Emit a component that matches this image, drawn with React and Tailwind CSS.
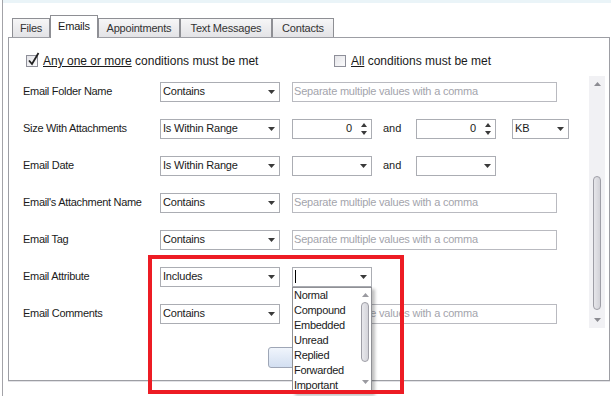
import React from "react";

const tabs = [
    { name: "Files", w: "w-[38px]" },
    { name: "Emails", w: "w-[48px]", active: true },
    { name: "Appointments", w: "w-[82px]" },
    { name: "Text Messages", w: "w-[92px]" },
    { name: "Contacts", w: "w-[62px]" },
];

const attributes = ["Normal", "Compound", "Embedded", "Unread", "Replied", "Forwarded", "Important"];

function Arrow({ color = "#3a3a3a" }) {
    return (
        <svg width="7" height="4" viewBox="0 0 7 4" className="shrink-0">
            <path d="M0 0h7L3.5 4z" fill={color} />
        </svg>
    );
}

function Select({ value, w = "w-[120px]", children }) {
    return (
        <div className={`relative flex h-[20px] ${w} shrink-0 items-center border border-[#abadb3] bg-white pl-[2px] pr-[4px]`}>
            <span className="flex-1 text-[11px] tracking-[-0.2px] text-[#1a1a1a]">{value}</span>
            <Arrow />
            {children}
        </div>
    );
}

function TextInput() {
    return (
        <div className="ml-[12px] flex h-[20px] w-[265px] items-center border border-[#b9bac0] bg-white px-[1px] text-[11px] tracking-[-0.2px] text-[#a3a4ac]">
            Separate multiple values with a comma
        </div>
    );
}

function Spinner() {
    return (
        <div className="flex h-[20px] w-[80px] shrink-0 items-center border border-[#abadb3] bg-white pr-[4px]">
            <span className="flex-1 pr-[9px] text-right text-[11px] text-[#1a1a1a]">0</span>
            <div className="flex flex-col gap-[4px]">
                <svg width="6" height="4" viewBox="0 0 6 4"><path d="M0 4h6L3 0z" fill="#3a3a3a" /></svg>
                <svg width="6" height="4" viewBox="0 0 6 4"><path d="M0 0h6L3 4z" fill="#3a3a3a" /></svg>
            </div>
        </div>
    );
}

function Row({ label, children }) {
    return (
        <div className="flex h-[37px] items-center">
            <div className="w-[137px] shrink-0 text-[11px] tracking-[-0.3px] text-[#1b1b1b]">{label}</div>
            {children}
        </div>
    );
}

function And() {
    return <div className="ml-[11px] w-[33px] shrink-0 text-[11px] text-[#1b1b1b]">and</div>;
}

function AttributeList() {
    return (
        <div className="absolute left-[-1px] top-[19px] z-20 flex h-[107px] w-[80px] border border-[#8f9095] bg-white shadow-[3px_2px_3px_rgba(0,0,0,0.25)]">
            <div className="flex-1 pl-[1px]">
                {attributes.map((a) => (
                    <div key={a} className="h-[15px] text-[11px] leading-[15px] tracking-[-0.3px] text-[#1a1a1a]">
                        {a}
                    </div>
                ))}
            </div>
            <div className="flex w-[12px] flex-col items-center pt-[5px]">
                <svg width="7" height="4" viewBox="0 0 7 4"><path d="M0 4h7L3.5 0z" fill="#9a9aa0" /></svg>
                <div className="mt-[5px] h-[60px] w-[8px] rounded-full border border-[#9e9ea6] bg-gradient-to-r from-[#e8e8ec] to-[#d4d4da]" />
                <div className="mt-[18px]">
                    <svg width="7" height="4" viewBox="0 0 7 4"><path d="M0 0h7L3.5 4z" fill="#9a9aa0" /></svg>
                </div>
            </div>
        </div>
    );
}

function Checkbox({ checked }) {
    return (
        <div className="relative h-[12px] w-[12px] shrink-0 border border-[#8e8f99] bg-gradient-to-br from-[#e4e4e8] to-[#fbfbfc]">
            {checked && (
                <svg width="13" height="14" viewBox="0 0 13 14" className="absolute left-[0px] top-[-4px]">
                    <path d="M2 8.5l3 3.5L11.5 1" fill="none" stroke="#222" strokeWidth="1.8" />
                </svg>
            )}
        </div>
    );
}

export default function App() {
    return (
        <div className="relative h-[396px] w-[611px] overflow-hidden bg-white font-['Liberation_Sans',Arial,sans-serif]">
            <div className="ml-[2px] h-full border-l border-[#a3a3a8]">
                <div className="h-[3px] bg-[#eaf4f8]" />

                <div className="ml-[9px] mt-[12px] flex items-end">
                    {tabs.map((t) =>
                        t.active ? (
                            <div
                                key={t.name}
                                className={`relative z-10 -mb-px flex h-[23px] ${t.w} items-center justify-center border border-b-0 border-[#8e8f94] bg-white pb-[2px] text-[11px] tracking-[-0.2px] text-[#1a1a1a]`}
                            >
                                {t.name}
                            </div>
                        ) : (
                            <div
                                key={t.name}
                                className={`flex h-[19px] ${t.w} items-center justify-center border border-b-0 border-[#8e8f94] bg-gradient-to-b from-[#f6f6f7] to-[#e3e3e6] text-[11px] tracking-[-0.2px] text-[#333]`}
                            >
                                {t.name}
                            </div>
                        )
                    )}
                </div>

                <div className="ml-[5px] flex h-[344px] w-[602px] border border-[#9d9ea4] shadow-[0_1px_0_#e2e2e6]">
                    <div className="flex-1 pl-[14px]">
                        <div className="mt-[15px] flex h-[16px] items-center pl-[3px]">
                            <div className="flex w-[308px] items-center gap-[5px]">
                                <Checkbox checked />
                                <span className="text-[12px] text-[#1a1a1a]">
                                    <span className="underline">Any one or more</span> conditions must be met
                                </span>
                            </div>
                            <div className="flex items-center gap-[5px]">
                                <Checkbox />
                                <span className="text-[12px] text-[#1a1a1a]">
                                    <span className="underline">All</span> conditions must be met
                                </span>
                            </div>
                        </div>

                        <div className="mt-[4px]">
                            <Row label="Email Folder Name">
                                <Select value="Contains" />
                                <TextInput />
                            </Row>
                            <Row label="Size With Attachments">
                                <Select value="Is Within Range" />
                                <div className="ml-[12px]">
                                    <Spinner />
                                </div>
                                <And />
                                <Spinner />
                                <div className="ml-[16px]">
                                    <Select value="KB" w="w-[57px]" />
                                </div>
                            </Row>
                            <Row label="Email Date">
                                <Select value="Is Within Range" />
                                <div className="ml-[12px]">
                                    <Select value="" w="w-[80px]" />
                                </div>
                                <And />
                                <Select value="" w="w-[80px]" />
                            </Row>
                            <Row label="Email's Attachment Name">
                                <Select value="Contains" />
                                <TextInput />
                            </Row>
                            <Row label="Email Tag">
                                <Select value="Contains" />
                                <TextInput />
                            </Row>
                            <Row label="Email Attribute">
                                <Select value="Includes" />
                                <div className="ml-[12px]">
                                    <Select value={<span className="inline-block h-[13px] w-px translate-y-[2px] bg-black" />} w="w-[80px]">
                                        <AttributeList />
                                    </Select>
                                </div>
                            </Row>
                            <Row label="Email Comments">
                                <Select value="Contains" />
                                <TextInput />
                            </Row>
                        </div>

                        <div className="ml-[245px] mt-[15px] h-[21px] w-[72px] rounded-[3px] border border-[#9ea6b6] bg-gradient-to-b from-[#f0f5fc] to-[#d3dff1]" />
                    </div>

                    <div className="mr-[4px] mt-[38px] flex h-[252px] w-[16px] flex-col items-center bg-[#f1f1f4]">
                        <div className="flex h-[16px] items-center">
                            <svg width="7" height="4" viewBox="0 0 7 4"><path d="M0 4h7L3.5 0z" fill="#8c8c92" /></svg>
                        </div>
                        <div className="mt-[84px] h-[136px] w-[8px] rounded-full border border-[#9e9ea6] bg-gradient-to-r from-[#e6e6ea] to-[#d2d2d8]" />
                        <div className="mt-[2px] flex h-[16px] items-center">
                            <svg width="7" height="4" viewBox="0 0 7 4"><path d="M0 0h7L3.5 4z" fill="#8c8c92" /></svg>
                        </div>
                    </div>
                </div>
            </div>

            <div className="pointer-events-none absolute left-[148px] top-[255px] z-30 h-[139px] w-[256px] border-4 border-[#ed1c24]" />
        </div>
    );
}
